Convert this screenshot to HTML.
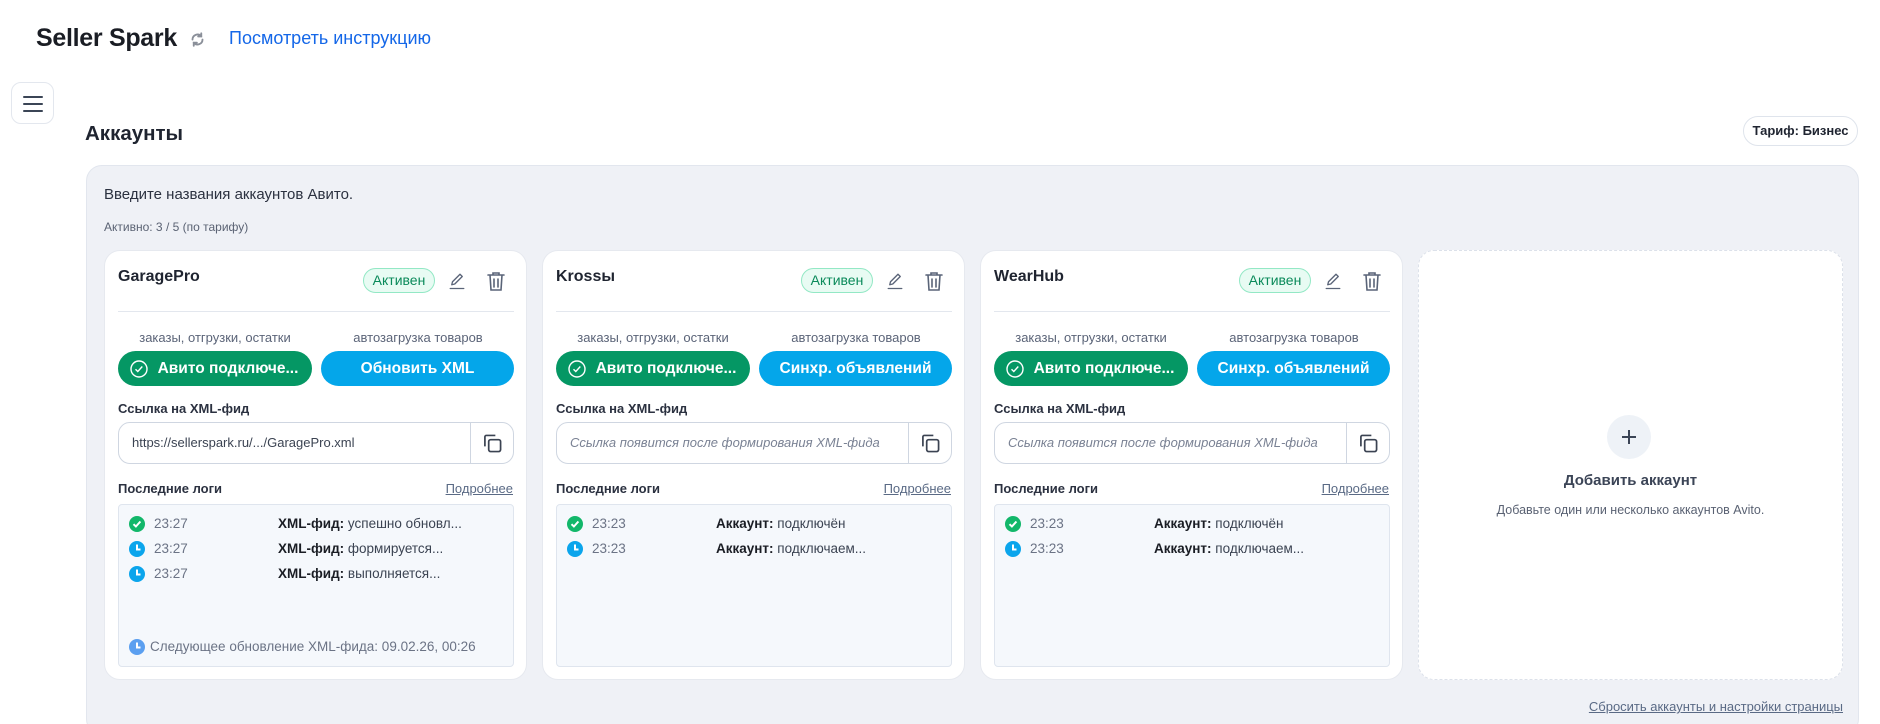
<!DOCTYPE html>
<html><head><meta charset="utf-8">
<style>
*{box-sizing:border-box;margin:0;padding:0}
html{width:1880px;height:724px;overflow:hidden}
body{width:1880px;height:724px;overflow:hidden;background:#fff;font-family:"Liberation Sans","DejaVu Sans",sans-serif;color:#1f2430;position:relative}
.abs{position:absolute}
.title{left:36px;top:24px;font-size:25px;font-weight:700;color:#1a1d24;letter-spacing:-0.3px}
.link{left:229px;top:28px;font-size:18px;color:#1467e8}
.ham{left:11px;top:82px;width:43px;height:42px;border:1px solid #e3e7ee;border-radius:10px;background:#fff}
.ham i{position:absolute;left:11px;width:20px;height:2px;background:#3b4556;border-radius:1px}
.h2{left:85px;top:122px;font-size:20.5px;font-weight:600;color:#1f2430}
.tariff{left:1743px;top:116px;width:115px;height:30px;border:1px solid #dfe4ec;border-radius:15px;font-size:13px;font-weight:700;color:#1f2430;text-align:center;line-height:28px}
.cont{left:86px;top:165px;width:1773px;height:570px;background:#eff1f6;border:1px solid #e2e6ee;border-radius:16px}
.intro{left:104px;top:186px;font-size:15px;color:#2b3140}
.active{left:104px;top:220px;font-size:12px;color:#5a6273}
.card{top:250px;width:423px;height:430px;background:#fff;border-radius:16px;border:1px solid #e6e9ef}
.name{left:13px;top:17px;font-size:16px;font-weight:700;color:#1f2430}
.pill{left:258px;top:17px;width:72px;height:25px;border:1px solid #93e8c5;background:#e8fbf3;border-radius:13px;color:#0a8a5a;font-size:14px;text-align:center;line-height:23px}
.div{left:13px;top:60px;width:396px;height:1px;background:#e3e7ee}
.lbl{top:79px;width:194px;text-align:center;font-size:13px;color:#5b6478}
.btn{top:100px;height:35px;border-radius:18px;color:#fff;font-size:15.5px;font-weight:700;text-align:center;line-height:35px}
.g{left:13px;width:194px;background:#059764}
.b{left:216px;width:193px;background:#04a6ea}
.sl{left:13px;top:150px;font-size:13px;font-weight:700;color:#2b3140}
.inp{left:13px;top:171px;width:396px;height:42px;border:1px solid #cfd6e1;border-radius:12px}
.inp .t{position:absolute;left:13px;top:12px;font-size:13px;color:#3b4352}
.inp .t.ph{font-style:italic;color:#7a8294}
.inp .sep{position:absolute;left:351px;top:0;width:1px;height:40px;background:#cfd6e1}
.logs{left:13px;top:230px;font-size:13px;font-weight:700;color:#2b3140}
.more{right:13px;top:230px;font-size:13px;color:#5a6a85;text-decoration:underline}
.lb{left:13px;top:253px;width:396px;height:163px;background:#f5f8fc;border:1px solid #dfe5ee;border-radius:4px}
.row{position:absolute;left:10px;height:18px;font-size:13.5px;width:380px}
.row svg{position:absolute;left:0;top:1px}
.row .tm{position:absolute;left:25px;top:1px;color:#6b7385}
.row .m{position:absolute;left:149px;top:1px;color:#3b4352}
.row .m b{color:#1a1d24}
.next{position:absolute;left:10px;top:133px;font-size:13.5px;color:#6b7385}
.next svg{position:absolute;left:0;top:1px}
.next span{position:absolute;left:21px;top:1px;white-space:nowrap}
.add{left:1418px;top:250px;width:425px;height:430px;background:#fff;border:1.5px dashed #dce1ea;border-radius:16px}
</style></head><body>
<div class="abs title">Seller Spark</div>
<svg class="abs" style="left:190px;top:32px" width="15" height="15" viewBox="0 0 24 24" fill="none" stroke="#8a8f99" stroke-width="3" stroke-linecap="round"><path d="M20 12a8 8 0 0 1-14 5.3M4 12a8 8 0 0 1 14-5.3"/><path d="M18 2v5h-5M6 22v-5h5"/></svg>
<div class="abs link">Посмотреть инструкцию</div>
<div class="abs ham"><i style="top:13px"></i><i style="top:20px"></i><i style="top:27px"></i></div>
<div class="abs h2">Аккаунты</div>
<div class="abs tariff">Тариф: Бизнес</div>
<div class="abs cont"></div>
<div class="abs intro">Введите названия аккаунтов Авито.</div>
<div class="abs active">Активно: 3 / 5 (по тарифу)</div>

<div class="abs card" style="left:104px">
 <div class="abs name">GaragePro</div>
 <div class="abs pill">Активен</div>
 <svg class="abs" style="left:343px;top:21px" width="18" height="18" viewBox="0 0 24 24" fill="none" stroke="#5a6478" stroke-width="1.8" stroke-linecap="round" stroke-linejoin="round"><path d="M5 17l1-4L16 3l3 3L9 16z"/><path d="M3 22h18"/></svg>
 <svg class="abs" style="left:382px;top:20px" width="18" height="21" viewBox="0 0 18 21" fill="none" stroke="#5a6478" stroke-width="1.6" stroke-linecap="round"><path d="M1 4h16M6 4V2h6v2M3 4l1 15h10l1-15M7 8v8M11 8v8"/></svg>
 <div class="abs div"></div>
 <div class="abs lbl" style="left:13px">заказы, отгрузки, остатки</div>
 <div class="abs lbl" style="left:216px">автозагрузка товаров</div>
 <div class="abs btn g"><svg style="position:absolute;left:12px;top:9px" width="18" height="18" viewBox="0 0 18 18" fill="none" stroke="#fff" stroke-width="1.4"><circle cx="9" cy="9" r="8"/><path d="M5.5 9.2l2.3 2.3 4.5-5"/></svg><span style="padding-left:26px">Авито подключе...</span></div>
 <div class="abs btn b">Обновить XML</div>
 <div class="abs sl">Ссылка на XML-фид</div>
 <div class="abs inp"><div class="t">https://sellerspark.ru/.../GaragePro.xml</div><div class="sep"></div>
  <svg style="position:absolute;left:364px;top:11px" width="19" height="19" viewBox="0 0 20 20" fill="none" stroke="#3b4352" stroke-width="1.8"><path d="M2 13V3a1.5 1.5 0 0 1 1.5-1.5H13"/><rect x="6" y="6" width="12.5" height="12.5" rx="2"/></svg></div>
 <div class="abs logs">Последние логи</div>
 <div class="abs more">Подробнее</div>
 <div class="abs lb">
  <div class="row" style="top:10px"><svg width="16" height="16"><circle cx="8" cy="8" r="8" fill="#12b76a"/><path d="M4.5 8.2l2.4 2.3 4.5-5" stroke="#fff" stroke-width="2" fill="none"/></svg><span class="tm">23:27</span><span class="m"><b>XML-фид:</b> успешно обновл...</span></div>
  <div class="row" style="top:35px"><svg width="16" height="16"><circle cx="8" cy="8" r="8" fill="#0ba5ec"/><path d="M8 3.5V8.5h3.5" stroke="#fff" stroke-width="2" fill="none"/></svg><span class="tm">23:27</span><span class="m"><b>XML-фид:</b> формируется...</span></div>
  <div class="row" style="top:60px"><svg width="16" height="16"><circle cx="8" cy="8" r="8" fill="#0ba5ec"/><path d="M8 3.5V8.5h3.5" stroke="#fff" stroke-width="2" fill="none"/></svg><span class="tm">23:27</span><span class="m"><b>XML-фид:</b> выполняется...</span></div>
  <div class="next"><svg width="16" height="16"><circle cx="8" cy="8" r="8" fill="#5b9ff0"/><path d="M8 3.5V8.5h3.5" stroke="#fff" stroke-width="2" fill="none"/></svg><span>Следующее обновление XML-фида: 09.02.26, 00:26</span></div>
 </div>
</div>

<div class="abs card" style="left:542px">
 <div class="abs name">Krossы</div>
 <div class="abs pill">Активен</div>
 <svg class="abs" style="left:343px;top:21px" width="18" height="18" viewBox="0 0 24 24" fill="none" stroke="#5a6478" stroke-width="1.8" stroke-linecap="round" stroke-linejoin="round"><path d="M5 17l1-4L16 3l3 3L9 16z"/><path d="M3 22h18"/></svg>
 <svg class="abs" style="left:382px;top:20px" width="18" height="21" viewBox="0 0 18 21" fill="none" stroke="#5a6478" stroke-width="1.6" stroke-linecap="round"><path d="M1 4h16M6 4V2h6v2M3 4l1 15h10l1-15M7 8v8M11 8v8"/></svg>
 <div class="abs div"></div>
 <div class="abs lbl" style="left:13px">заказы, отгрузки, остатки</div>
 <div class="abs lbl" style="left:216px">автозагрузка товаров</div>
 <div class="abs btn g"><svg style="position:absolute;left:12px;top:9px" width="18" height="18" viewBox="0 0 18 18" fill="none" stroke="#fff" stroke-width="1.4"><circle cx="9" cy="9" r="8"/><path d="M5.5 9.2l2.3 2.3 4.5-5"/></svg><span style="padding-left:26px">Авито подключе...</span></div>
 <div class="abs btn b">Синхр. объявлений</div>
 <div class="abs sl">Ссылка на XML-фид</div>
 <div class="abs inp"><div class="t ph">Ссылка появится после формирования XML-фида</div><div class="sep"></div>
  <svg style="position:absolute;left:364px;top:11px" width="19" height="19" viewBox="0 0 20 20" fill="none" stroke="#3b4352" stroke-width="1.8"><path d="M2 13V3a1.5 1.5 0 0 1 1.5-1.5H13"/><rect x="6" y="6" width="12.5" height="12.5" rx="2"/></svg></div>
 <div class="abs logs">Последние логи</div>
 <div class="abs more">Подробнее</div>
 <div class="abs lb">
  <div class="row" style="top:10px"><svg width="16" height="16"><circle cx="8" cy="8" r="8" fill="#12b76a"/><path d="M4.5 8.2l2.4 2.3 4.5-5" stroke="#fff" stroke-width="2" fill="none"/></svg><span class="tm">23:23</span><span class="m"><b>Аккаунт:</b> подключён</span></div>
  <div class="row" style="top:35px"><svg width="16" height="16"><circle cx="8" cy="8" r="8" fill="#0ba5ec"/><path d="M8 3.5V8.5h3.5" stroke="#fff" stroke-width="2" fill="none"/></svg><span class="tm">23:23</span><span class="m"><b>Аккаунт:</b> подключаем...</span></div>
 </div>
</div>

<div class="abs card" style="left:980px">
 <div class="abs name">WearHub</div>
 <div class="abs pill">Активен</div>
 <svg class="abs" style="left:343px;top:21px" width="18" height="18" viewBox="0 0 24 24" fill="none" stroke="#5a6478" stroke-width="1.8" stroke-linecap="round" stroke-linejoin="round"><path d="M5 17l1-4L16 3l3 3L9 16z"/><path d="M3 22h18"/></svg>
 <svg class="abs" style="left:382px;top:20px" width="18" height="21" viewBox="0 0 18 21" fill="none" stroke="#5a6478" stroke-width="1.6" stroke-linecap="round"><path d="M1 4h16M6 4V2h6v2M3 4l1 15h10l1-15M7 8v8M11 8v8"/></svg>
 <div class="abs div"></div>
 <div class="abs lbl" style="left:13px">заказы, отгрузки, остатки</div>
 <div class="abs lbl" style="left:216px">автозагрузка товаров</div>
 <div class="abs btn g"><svg style="position:absolute;left:12px;top:9px" width="18" height="18" viewBox="0 0 18 18" fill="none" stroke="#fff" stroke-width="1.4"><circle cx="9" cy="9" r="8"/><path d="M5.5 9.2l2.3 2.3 4.5-5"/></svg><span style="padding-left:26px">Авито подключе...</span></div>
 <div class="abs btn b">Синхр. объявлений</div>
 <div class="abs sl">Ссылка на XML-фид</div>
 <div class="abs inp"><div class="t ph">Ссылка появится после формирования XML-фида</div><div class="sep"></div>
  <svg style="position:absolute;left:364px;top:11px" width="19" height="19" viewBox="0 0 20 20" fill="none" stroke="#3b4352" stroke-width="1.8"><path d="M2 13V3a1.5 1.5 0 0 1 1.5-1.5H13"/><rect x="6" y="6" width="12.5" height="12.5" rx="2"/></svg></div>
 <div class="abs logs">Последние логи</div>
 <div class="abs more">Подробнее</div>
 <div class="abs lb">
  <div class="row" style="top:10px"><svg width="16" height="16"><circle cx="8" cy="8" r="8" fill="#12b76a"/><path d="M4.5 8.2l2.4 2.3 4.5-5" stroke="#fff" stroke-width="2" fill="none"/></svg><span class="tm">23:23</span><span class="m"><b>Аккаунт:</b> подключён</span></div>
  <div class="row" style="top:35px"><svg width="16" height="16"><circle cx="8" cy="8" r="8" fill="#0ba5ec"/><path d="M8 3.5V8.5h3.5" stroke="#fff" stroke-width="2" fill="none"/></svg><span class="tm">23:23</span><span class="m"><b>Аккаунт:</b> подключаем...</span></div>
 </div>
</div>

<div class="abs add">
 <div class="abs" style="left:188px;top:164px;width:44px;height:44px;border-radius:22px;background:#eef2f7"></div>
 <svg class="abs" style="left:202px;top:178px" width="16" height="16"><path d="M8 1v14M1 8h14" stroke="#3b4556" stroke-width="2"/></svg>
 <div class="abs" style="left:0;width:100%;top:221px;text-align:center;font-size:15px;font-weight:700;color:#3b4456">Добавить аккаунт</div>
 <div class="abs" style="left:0;width:100%;top:252px;text-align:center;font-size:12.5px;color:#5a6273">Добавьте один или несколько аккаунтов Avito.</div>
</div>
<div class="abs" style="right:37px;top:699px;font-size:13px;color:#5a6a85;text-decoration:underline">Сбросить аккаунты и настройки страницы</div>
</body></html>
